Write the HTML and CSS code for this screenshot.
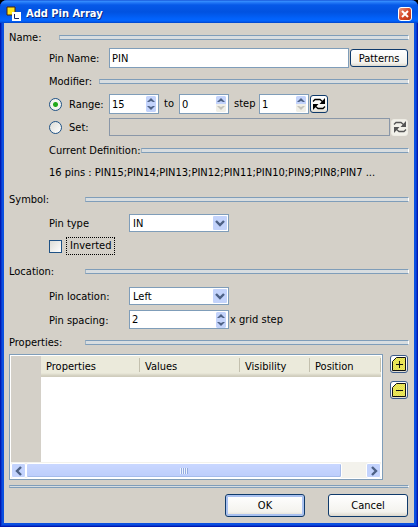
FILE: index.html
```html
<!DOCTYPE html>
<html lang="en">
<head>
<meta charset="utf-8">
<title>Add Pin Array</title>
<link rel="stylesheet" href="styles.css">
</head>
<body>
<svg class="defs" aria-hidden="true">
  <defs>
    <symbol id="spin" viewBox="0 0 10 16">
      <path class="spin-top" d="M1 0h8l1 1v7H0V1z"/>
      <path class="spin-bottom" d="M0 8h10v7l-1 1H1l-1-1z"/>
      <path class="spin-up" d="M5 2l4 4H7L5 5 3 6H1z"/>
      <path class="spin-down" d="M5 14l4-4H7L5 11 3 10H1z"/>
    </symbol>
    <symbol id="drop" viewBox="0 0 14 14">
      <rect width="14" height="14" rx="1" fill="#c3d3fb"/>
      <path d="M3 5l4 4 4-4" fill="none" stroke="#4d6185" stroke-width="2.4"/>
    </symbol>
    <symbol id="refresh" viewBox="0 0 14 14">
      <path d="M1 4.500L3 2.500H8L11 5M13 9.500L11 11.500H6L3 9" fill="none" stroke="currentColor" stroke-width="1.300"/>
      <path d="M13 1v6H7.500zM1 13V7h5.500z" fill="currentColor"/>
    </symbol>
    <pattern id="dots" width="2" height="2" patternUnits="userSpaceOnUse">
      <rect width="2" height="2" fill="#f3ee52"/>
      <path d="M0 0h1v1H0zM1 1h1v1H1z" fill="#dcd95c"/>
    </pattern>
  </defs>
</svg>
<div class="window">
  <header class="titlebar">
    <svg class="logo" width="15" height="15" viewBox="0 0 15 15" aria-hidden="true">
      <path d="M1 1h8v8H1z" fill="#fce51c" stroke="#4a2208"/>
      <path d="M6 6h9v9H6z" fill="#fff"/>
      <path d="M8.500 8v4.500H13" fill="none" stroke="#15246a"/>
    </svg>
    <h1>Add Pin Array</h1>
    <button class="close" type="button" aria-label="Close">
      <svg width="8" height="8" viewBox="0 0 8 8"><path d="M1 1l6 6M7 1L1 7" stroke="#fff" stroke-width="2"/></svg>
    </button>
  </header>

  <form class="content">
    <h2 class="rule name-rule"><span>Name:</span></h2>
    <div class="group">
      <div class="row name-row">
        <label class="caption" for="pin-name"><span>Pin Name:</span></label>
        <input class="text grow" id="pin-name" type="text" value="PIN">
        <button class="button patterns" type="button">Patterns</button>
      </div>
      <h3 class="rule modifier-rule"><span>Modifier:</span></h3>
      <div class="row range-row">
        <label class="caption choice"><input type="radio" name="mode" checked><span>Range:</span></label>
        <span class="spinner"><input id="from" type="text" value="15" aria-label="Range from"><svg class="spin"><use href="#spin"/></svg></span>
        <label class="to" for="to">to</label>
        <span class="spinner at-min"><input id="to" type="text" value="0"><svg class="spin"><use href="#spin"/></svg></span>
        <label class="step" for="step">step</label>
        <span class="spinner at-min"><input id="step" type="text" value="1"><svg class="spin"><use href="#spin"/></svg></span>
        <button class="button icon" type="button" aria-label="Reverse range"><svg width="14" height="14"><use href="#refresh"/></svg></button>
      </div>
      <div class="row set-row">
        <label class="caption choice"><input type="radio" name="mode"><span>Set:</span></label>
        <input class="text grow" type="text" aria-label="Set" disabled>
        <button class="button icon" type="button" aria-label="Reverse set" disabled><svg width="14" height="14"><use href="#refresh"/></svg></button>
      </div>
      <h3 class="rule definition-rule"><span>Current Definition:</span></h3>
      <p class="definition">16 pins : PIN15;PIN14;PIN13;PIN12;PIN11;PIN10;PIN9;PIN8;PIN7 ...</p>
    </div>

    <h2 class="rule symbol-rule"><span>Symbol:</span></h2>
    <div class="group wide">
      <div class="row">
        <label class="caption" for="pin-type"><span>Pin type</span></label>
        <span class="select"><select id="pin-type"><option>IN</option></select><svg class="drop"><use href="#drop"/></svg></span>
      </div>
      <div class="row">
        <label class="choice check"><input type="checkbox"><span>Inverted</span></label>
      </div>
    </div>

    <h2 class="rule location-rule"><span>Location:</span></h2>
    <div class="group wide">
      <div class="row">
        <label class="caption" for="pin-location"><span>Pin location:</span></label>
        <span class="select"><select id="pin-location"><option>Left</option></select><svg class="drop"><use href="#drop"/></svg></span>
      </div>
      <div class="row">
        <label class="caption" for="pin-spacing"><span>Pin spacing:</span></label>
        <span class="spinner long"><input id="pin-spacing" type="text" value="2"><svg class="spin"><use href="#spin"/></svg></span>
        <span class="unit">x grid step</span>
      </div>
    </div>

    <h2 class="rule properties-rule"><span>Properties:</span></h2>
    <div class="properties">
      <div class="list">
        <div class="sheet">
          <table>
            <colgroup><col class="c-gutter"><col class="c-name"><col class="c-value"><col class="c-vis"><col class="c-pos"></colgroup>
            <thead><tr><td></td><th scope="col">Properties</th><th scope="col">Values</th><th scope="col">Visibility</th><th scope="col">Position</th></tr></thead>
            <tbody><tr><td></td><td colspan="4"></td></tr></tbody>
          </table>
        </div>
        <div class="scrollbar">
          <button type="button" aria-label="Scroll left"><svg width="8" height="10" viewBox="0 0 8 10"><path d="M6 1L2 5l4 4" fill="none" stroke="#4d6185" stroke-width="2.400"/></svg></button>
          <div class="track"><div class="thumb"><i></i></div></div>
          <button type="button" aria-label="Scroll right"><svg width="8" height="10" viewBox="0 0 8 10"><path d="M2 1l4 4-4 4" fill="none" stroke="#4d6185" stroke-width="2.400"/></svg></button>
        </div>
      </div>
      <div class="tools">
        <button class="button icon" type="button" aria-label="Add property"><svg width="16" height="16" viewBox="0 0 16 16"><path d="M1 1h5L1 6z" fill="#fff"/><path d="M5.500 1.500h9v13h-13v-9z" fill="url(#dots)" stroke="#111"/><path d="M5 8.500h7M8.500 5v7" stroke="#111"/></svg></button>
        <button class="button icon" type="button" aria-label="Remove property"><svg width="16" height="16" viewBox="0 0 16 16"><path d="M1 1h5L1 6z" fill="#fff"/><path d="M5.500 1.500h9v13h-13v-9z" fill="url(#dots)" stroke="#111"/><path d="M5 8.500h7" stroke="#111"/></svg></button>
      </div>
    </div>

    <hr>
    <footer class="actions">
      <button class="button default" type="submit">OK</button>
      <button class="button" type="button">Cancel</button>
    </footer>
  </form>
</div>
</body>
</html>
```
FILE: styles.css
```css
* { box-sizing: border-box; }

body {
  margin: 0;
  background: #000;
  color: #000;
  font: 11px/18px "DejaVu Sans Condensed", "DejaVu Sans", sans-serif;
}

.defs { position: absolute; width: 0; height: 0; }

h1, h2, h3, p { margin: 0; font-size: inherit; font-weight: normal; }

button, input, select { margin: 0; font: inherit; color: inherit; }

svg { display: block; flex: none; }

.window {
  display: flex;
  flex-direction: column;
  min-height: 100vh;
  padding: 0 4px 4px;
  border-radius: 7px 7px 0 0;
  overflow: hidden;
  background: #0a4fe0;
  box-shadow: inset 1px -1px #0019b0, inset -1px -1px #0019b0, inset 2px -2px #0838cf, inset -2px -2px #0838cf;
}

.titlebar {
  display: flex;
  align-items: center;
  height: 23px;
  margin: 0 -4px;
  padding: 4px 6px 0;
  background: linear-gradient(#0a3ecb 0, #3a94ff 1px, #2a80fa 2px, #0659e8 5px, #0152e0 12px, #0263fc 19px, #0263fc 21px, #0144c8 23px);
}

.titlebar h1 {
  flex: 1;
  margin-left: 5px;
  padding-top: 1px;
  color: #fff;
  font: bold 11px/16px "DejaVu Sans Condensed", sans-serif;
  text-shadow: 1px 1px #0a2a80;
}

.close {
  display: grid;
  place-items: center;
  width: 14px;
  height: 14px;
  padding: 0;
  border: 1px solid #fff;
  border-radius: 3px;
  background: linear-gradient(135deg, #eb9a80, #d8492a 50%, #b83312);
}

.content {
  flex: 1;
  display: flex;
  flex-direction: column;
  padding: 5px 5px 6px;
  background: #d4d0c8;
}

.rule {
  display: flex;
  align-items: center;
  height: 18px;
}

.rule::after, hr {
  content: "";
  height: 3px;
  margin: 0;
  border: 1px solid #7f9db9;
  border-right-color: #fff;
  border-left-color: #9fb2c2;
  background: #d8dde0;
}

.rule::after { flex: 1; }
.rule span { padding-top: 2px; white-space: nowrap; }
.name-rule span { min-width: 50px; }
.modifier-rule span { min-width: 50px; }
.symbol-rule span, .location-rule span, .properties-rule span { min-width: 76px; }

.name-rule { margin-bottom: 2px; }
.modifier-rule { margin: 4px 0; }
.definition-rule { margin: 5px 0; }
.definition { white-space: nowrap; }
.symbol-rule { margin: 8px 0 6px; }
.location-rule { margin: 7px 0; }
.properties-rule { margin: 4px 0 3px; }

.group { padding-left: 40px; }
.wide { display: grid; gap: 5px; }

.row { display: flex; align-items: center; }
.caption { width: 60px; height: 18px; }
.caption span { display: block; padding-top: 1px; line-height: 18px; }
.wide .caption { width: 80px; }
.grow { flex: 1; min-width: 0; }

.text {
  height: 20px;
  padding: 1px 2px 0;
  border: 1px solid #7f9db9;
  background: #fff;
}

.text:disabled { height: 18px; background: #d4d0c8; border-color: #8a97a8; }

.name-row, .set-row { padding-right: 1px; }
.set-row { margin-top: 4px; }

.button {
  height: 23px;
  padding: 0;
  border: 1px solid #0f3a6b;
  border-radius: 3px;
  background: linear-gradient(#fff, #f4f3ee 80%, #dcd8cc);
}

.patterns { width: 58px; height: 18px; margin-left: 1px; padding-top: 1px; line-height: 15px; }

.icon {
  display: grid;
  place-items: center;
  width: 18px;
  height: 18px;
  margin-left: 1px;
}

.icon:disabled { width: 17px; height: 17px; border-color: #eeece4; color: #555; background: #f2f1ea; }

.choice { display: flex; align-items: center; }

.choice input {
  flex: none;
  appearance: none;
  width: 13px;
  height: 13px;
  margin-right: 7px;
  border: 1px solid #1f5286;
  background: linear-gradient(135deg, #dcdcd6, #fff);
}

.choice input[type="radio"] { border-radius: 50%; }

.choice input:checked {
  background: radial-gradient(circle, #22a81c 0, #22a81c 2px, #f4f4f0 3px);
}

.check input { margin-right: 4px; }
.check span { height: 18px; padding: 0 3px; border: 1px dotted #000; line-height: 16px; }

.spinner {
  display: flex;
  align-items: center;
  width: 50px;
  height: 20px;
  padding: 0 2px;
  border: 1px solid #7f9db9;
  background: #fff;
}

.spinner input {
  flex: 1;
  min-width: 0;
  height: 18px;
  padding: 1px 0 0;
  border: 0;
  background: none;
}

.long { width: 100px; height: 19px; }
.spin { width: 10px; height: 16px; }
.spin-top { fill: #c3d3fb; }
.spin-bottom { fill: var(--down-face, #c3d3fb); }
.spin-up { fill: #4d6185; }
.spin-down { fill: var(--down, #4d6185); }
.at-min { --down: #c4c3bb; --down-face: #f0efe8; }

.to { width: 20px; padding-left: 5px; }
.step { width: 30px; padding-left: 5px; }
.unit { margin-left: 1px; }

.select { position: relative; width: 100px; height: 18px; }

.select select {
  display: block;
  appearance: none;
  width: 100%;
  height: 18px;
  padding: 1px 18px 0 3px;
  border: 1px solid #7f9db9;
  border-radius: 0;
  background: #fff;
  line-height: 15px;
}

.drop {
  position: absolute;
  top: 2px;
  right: 2px;
  width: 14px;
  height: 14px;
  pointer-events: none;
}

.properties { flex: 1; display: flex; gap: 6px; padding-right: 1px; }

.list {
  flex: 1;
  display: flex;
  flex-direction: column;
  min-width: 0;
  padding: 1px;
  border: 1px solid #7f9db9;
  background: #fff;
}

.sheet { flex: 1; display: grid; }

table { width: 100%; height: 100%; table-layout: fixed; border-collapse: collapse; }
td { padding: 0; }
td:first-child { background: #d4d0c8; }

th {
  height: 21px;
  padding: 0 0 0 5px;
  font-weight: normal;
  text-align: left;
  background: linear-gradient(#c3c0ae, #c3c0ae) right 2px / 1px 14px no-repeat, linear-gradient(#ebeadb 17px, #d0cdbd 20px);
}

thead tr { height: 21px; }
.c-gutter { width: 30px; }
.c-name { width: 99px; }
.c-value { width: 100px; }
.c-vis { width: 70px; }

.scrollbar { display: flex; height: 16px; padding-top: 1px; background: #f3f2ec; }

.scrollbar button {
  display: grid;
  place-items: center;
  width: 15px;
  height: 15px;
  padding: 0;
  border: 1px solid #fff;
  border-radius: 2px;
  background: #c3d3fd;
}

.track { flex: 1; }

.thumb {
  display: grid;
  place-items: center;
  width: 93%;
  height: 15px;
  border: 1px solid #fff;
  border-radius: 2px;
  background: linear-gradient(#c9d7ff, #bccdfb);
  box-shadow: inset -1px -1px #a5bbea;
}

.thumb i { width: 8px; height: 6px; background: repeating-linear-gradient(90deg, #eef4fe 0 1px, #93abe0 1px 2px); }

.tools { display: flex; flex-direction: column; gap: 8px; padding-top: 1px; }
.tools .icon { border-color: #3a5a8a; }

hr { margin-top: 5px; }

.actions { display: flex; justify-content: flex-end; gap: 23px; padding: 6px 1px 0 0; }
.actions .button { width: 80px; }
.default { box-shadow: inset 0 0 0 2px #a9c1f0; }
```
